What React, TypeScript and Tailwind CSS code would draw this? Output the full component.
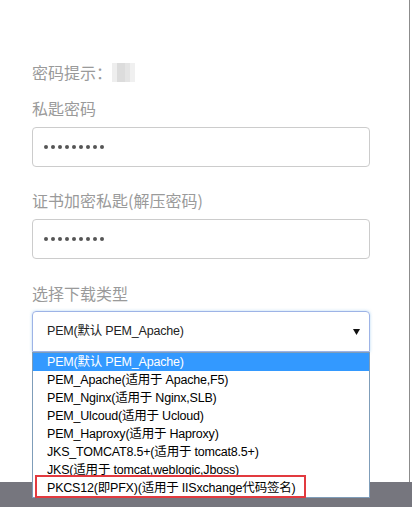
import React from "react";

const font = { fontFamily: '"Liberation Sans", "Noto Sans CJK SC", sans-serif' };

const items = [
  "PEM(默认 PEM_Apache)",
  "PEM_Apache(适用于 Apache,F5)",
  "PEM_Nginx(适用于 Nginx,SLB)",
  "PEM_Ulcoud(适用于 Ucloud)",
  "PEM_Haproxy(适用于 Haproxy)",
  "JKS_TOMCAT8.5+(适用于 tomcat8.5+)",
  "JKS(适用于 tomcat,weblogic,Jboss)",
  "PKCS12(即PFX)(适用于 IISxchange代码签名)",
];

function Dots() {
  return (
    <div className="flex items-center gap-[3px]">
      {Array.from({ length: 9 }).map((_, i) => (
        <span key={i} className="block w-[4px] h-[4px] rounded-full bg-[#555555]" />
      ))}
    </div>
  );
}

function Label({ children, className = "" }: { children: React.ReactNode; className?: string }) {
  return (
    <div
      className={"text-[16px] leading-[24px] text-[#9a9a9a] " + className}
      style={{ fontFamily: '"Noto Sans CJK SC", "Liberation Sans", sans-serif' }}
    >
      {children}
    </div>
  );
}

export default function App() {
  return (
    <div className="relative w-[412px] h-[507px] bg-white overflow-hidden flex flex-col" style={font}>
      <div className="flex-1 flex">
        <div className="w-[410px] border-r border-[#8c8c8c] pl-[32px] pr-[40px] pt-[60px] flex flex-col">
          <div className="flex items-center">
            <Label>密码提示：</Label>
            <div className="w-[23px] h-[19px] flex">
              <div className="w-[5px] h-full bg-[#eeeeee]" />
              <div className="w-[8px] h-full bg-[#dcdcdc]" />
              <div className="w-[5px] h-full bg-[#e4e4e4]" />
              <div className="w-[5px] h-full bg-[#f0f0f0]" />
            </div>
          </div>
          <Label className="mt-[12px] mb-[7px]">私匙密码</Label>
          <div className="h-[40px] w-[338px] border border-[#cccccc] rounded-[4px] flex items-center pl-[11px]">
            <Dots />
          </div>
          <Label className="mt-[21px] mb-[7px]">证书加密私匙(解压密码)</Label>
          <div className="h-[40px] w-[338px] border border-[#cccccc] rounded-[4px] flex items-center pl-[11px]">
            <Dots />
          </div>
          <Label className="mt-[22px] mb-[6px]">选择下载类型</Label>
          <div className="h-[41px] w-[338px] border border-[#9db3e6] rounded-t-[4px] shadow-[0_0_3px_rgba(102,175,233,0.5)] flex items-center pl-[14px] pr-[9px] text-[12.5px] tracking-[-0.2px] text-[#222222]">
            <span className="flex-1">PEM(默认 PEM_Apache)</span>
            <svg width="7" height="6" viewBox="0 0 7 6">
              <polygon points="0,0 7,0 3.5,6" fill="#111111" />
            </svg>
          </div>
        </div>
      </div>
      <div className="h-[25px] bg-[#76767e]" />

      <div className="absolute left-[32px] top-[352px] w-[338px] border border-[#7f9db9] bg-white text-[12.5px] tracking-[-0.2px] text-black">
        {items.map((t, i) => (
          <div
            key={t}
            className={
              "h-[18px] leading-[18px] pl-[14px] whitespace-nowrap " +
              (i === 0 ? "bg-[#3399ff] text-white" : "")
            }
          >
            {t}
          </div>
        ))}
      </div>
      <div className="absolute left-[35px] top-[475px] w-[271px] h-[23px] border-2 border-[#e23a3f]" />
    </div>
  );
}
